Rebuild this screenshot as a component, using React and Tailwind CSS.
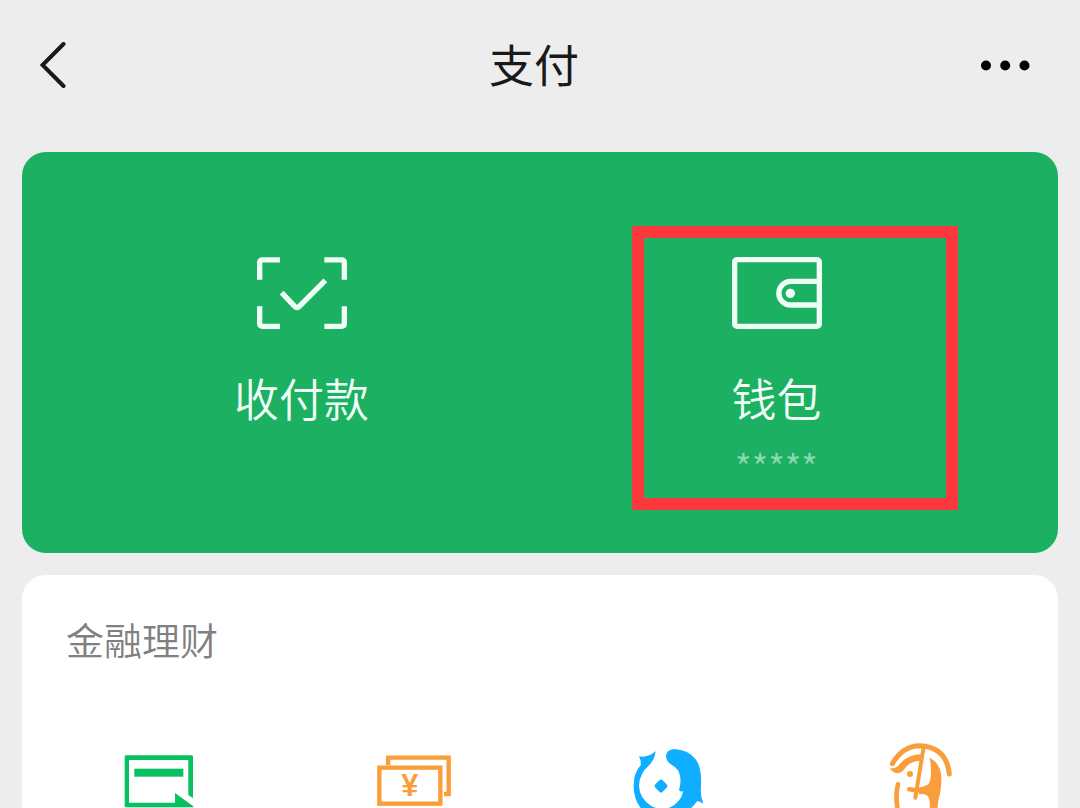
function BackIcon() {
  return (
    <svg viewBox="0 0 48 48" className="w-12 h-12" fill="none" stroke="#191919" strokeWidth="4" strokeLinecap="round">
      <path d="M23.5 2 2.5 23 23.5 44" />
    </svg>
  );
}

function MoreIcon() {
  return (
    <svg viewBox="0 0 50 48" className="w-[50px] h-12" fill="#000">
      <circle cx="6" cy="23.5" r="5" />
      <circle cx="25.2" cy="23.5" r="5" />
      <circle cx="44.5" cy="23.5" r="5" />
    </svg>
  );
}

function ScanPayIcon() {
  return (
    <svg viewBox="111 51 270 216" className="w-[90px] h-[72px]" fill="none" stroke="#f0fff5" strokeWidth="16">
      <path d="M180 59.5H128Q119 59.5 119 68V119" />
      <path d="M313 59.5H364Q373 59.5 373 68V119" />
      <path d="M119 199V250Q119 259 128 259H180" />
      <path d="M373 199V250Q373 259 364 259H313" />
      <path d="M185 158 224 199Q231 206 238 199L316 121" />
    </svg>
  );
}

function WalletIcon() {
  return (
    <svg viewBox="336 111 270 216" className="w-[90px] h-[72px]" fill="none" stroke="#f0fff5" strokeWidth="16">
      <rect x="344" y="119" width="254" height="200" rx="7" />
      <path d="M598 184H512A35.5 35.5 0 0 0 512 255H598" />
      <circle cx="511" cy="220" r="14" fill="#f0fff5" stroke="none" />
    </svg>
  );
}

function CardIcon() {
  return (
    <svg viewBox="57 15 240 240" className="w-20 h-20" fill="#07c160">
      <path d="M78 61H275Q279 61 279 65V190L265 180V75H87V203H225V174L279 213 281 217H78Q74 217 74 213V65Q74 61 78 61Z" />
      <rect x="103" y="101" width="147" height="24" />
    </svg>
  );
}

function CashIcon() {
  return (
    <svg viewBox="39 15 240 240" className="w-20 h-20" fill="none" stroke="#fa9d3b" strokeWidth="13">
      <path d="M84.5 91V68H266V177H252" />
      <rect x="58" y="98" width="183" height="108" />
      <text x="149" y="182" textAnchor="middle" fontSize="92" fontWeight="700" fill="#fa9d3b" stroke="none" className="font-['Liberation_Sans',sans-serif]">¥</text>
    </svg>
  );
}

function FundIcon() {
  return (
    <svg viewBox="51 15 240 240" className="w-20 h-20" fill="#10aeff">
      <path d="M87 64Q112 70 137 49Q134 74 118 90Q88 116 87 152Q88 190 125 214Q150 226 178 218L180 240H120L92 219Q70 190 71 150Q72 112 92 91Q94 78 87 64Z" />
      <path d="M168 62Q170 44 192 42Q236 44 258 74Q276 100 273 152Q270 182 280 206Q271 200 262 198Q250 214 238 224L180 240 178 218Q212 204 220 168Q212 172 207 166Q214 142 210 122Q206 102 187 91Q168 80 168 62Z" />
      <path d="M148 136Q153 131 158 136L170 148Q175 153 170 158L158 170Q153 175 148 170L136 158Q131 153 136 148Z" />
    </svg>
  );
}

function InsuranceIcon() {
  return (
    <svg viewBox="33 15 240 240" className="w-20 h-20" fill="#fa9d3b">
      <g fill="none" stroke="#fa9d3b" strokeLinecap="round">
        <path d="M67 86Q98 32 150 32Q230 36 238 117" strokeWidth="15" />
        <path d="M160 42 136 188" strokeWidth="12" />
        <path d="M118 163Q150 170 180 154" strokeWidth="14" />
        <path d="M84 148Q74 185 86 240" strokeWidth="14" />
      </g>
      <path d="M59 101Q78 101 86 91Q112 57 157 58L154 77Q122 76 103 103Q84 127 59 101Z" />
      <circle cx="120" cy="117" r="9" />
      <path d="M179 68Q216 88 214 135Q213 160 210 178Q202 198 202 240H176Q184 200 174 184Q162 174 146 178L150 158Q178 156 181 132Q186 106 179 68Z" />
    </svg>
  );
}

const services = [
  { name: '信用卡还款', Icon: CardIcon },
  { name: '微粒贷借钱', Icon: CashIcon },
  { name: '理财通', Icon: FundIcon },
  { name: '保险服务', Icon: InsuranceIcon },
];

export default function App() {
  return (
    <div className="h-screen overflow-hidden bg-[#ededed] font-['Noto_Sans_CJK_SC',sans-serif]">
      <header className="flex items-center justify-between h-[132px] pl-10 pr-[50px]">
        <button type="button" aria-label="返回"><BackIcon /></button>
        <h1 className="pb-1 text-[45px] leading-[66px] text-[#191919]">支付</h1>
        <button type="button" aria-label="更多"><MoreIcon /></button>
      </header>

      <main className="px-[22px] pt-5">
        {/* Pay / wallet */}
        <section className="grid grid-cols-2 rounded-3xl bg-[#1bb062] pl-[42px] pr-11 pt-[105px] pb-[62px] text-[#f0fff5]">
          <button type="button" className="flex flex-col items-center justify-start">
            <ScanPayIcon />
            <span className="mt-9 text-[45px] leading-[66px] font-[350]">收付款</span>
          </button>
          <button type="button" className="relative flex flex-col items-center justify-start">
            <WalletIcon />
            <span className="mt-9 text-[45px] leading-[66px] font-[350]">钱包</span>
            <span className="mt-2 text-[36px] leading-[52px] font-[350] text-[#8dd8b0]">*****</span>
            <span className="absolute -top-[31px] -bottom-[19px] left-[93px] right-14 border-12 border-[#fd383c]" />
          </button>
        </section>

        {/* Finance */}
        <section className="mt-[22px] rounded-3xl bg-white pt-9 pb-12">
          <h2 className="pl-11 text-[38px] leading-[56px] font-[350] text-[#808080]">金融理财</h2>
          <div className="mt-[73px] grid grid-cols-4 px-[10px]">
            {services.map(({ name, Icon }) => (
              <button key={name} type="button" aria-label={name} className="flex justify-center">
                <Icon />
              </button>
            ))}
          </div>
        </section>
      </main>
    </div>
  );
}
